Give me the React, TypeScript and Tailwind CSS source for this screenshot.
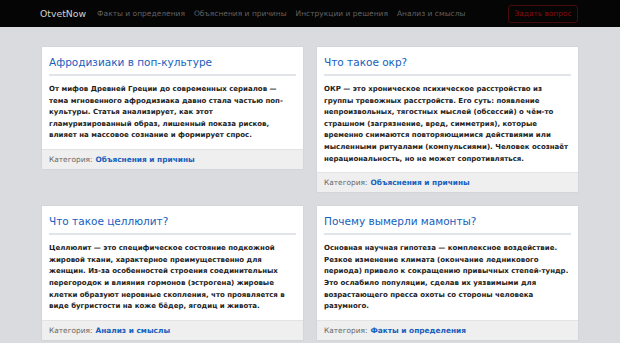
const nav = ['Факты и определения', 'Объяснения и причины', 'Инструкции и решения', 'Анализ и смыслы'];

// lines are broken where the original page breaks them
const cards = [
  {
    title: 'Афродизиаки в поп-культуре',
    lines: [
      'От мифов Древней Греции до современных сериалов —',
      'тема мгновенного афродизиака давно стала частью поп-',
      'культуры. Статья анализирует, как этот',
      'гламуризированный образ, лишенный показа рисков,',
      'влияет на массовое сознание и формирует спрос.',
    ],
    category: 'Объяснения и причины',
  },
  {
    title: 'Что такое окр?',
    lines: [
      'ОКР — это хроническое психическое расстройство из',
      'группы тревожных расстройств. Его суть: появление',
      'непроизвольных, тягостных мыслей (обсессий) о чём-то',
      'страшном (загрязнение, вред, симметрия), которые',
      'временно снимаются повторяющимися действиями или',
      'мысленными ритуалами (компульсиями). Человек осознаёт',
      'нерациональность, но не может сопротивляться.',
    ],
    category: 'Объяснения и причины',
  },
  {
    title: 'Что такое целлюлит?',
    lines: [
      'Целлюлит — это специфическое состояние подкожной',
      'жировой ткани, характерное преимущественно для',
      'женщин. Из-за особенностей строения соединительных',
      'перегородок и влияния гормонов (эстрогена) жировые',
      'клетки образуют неровные скопления, что проявляется в',
      'виде бугристости на коже бёдер, ягодиц и живота.',
    ],
    category: 'Анализ и смыслы',
  },
  {
    title: 'Почему вымерли мамонты?',
    lines: [
      'Основная научная гипотеза — комплексное воздействие.',
      'Резкое изменение климата (окончание ледникового',
      'периода) привело к сокращению привычных степей-тундр.',
      'Это ослабило популяции, сделав их уязвимыми для',
      'возрастающего пресса охоты со стороны человека',
      'разумного.',
    ],
    category: 'Факты и определения',
  },
];

export default function App() {
  return (
    <div className="min-h-[343px] bg-[#dadbde] font-['DejaVu_Sans',sans-serif]">
      <header className="h-[27px] bg-[#050505] flex items-center justify-between pl-[40px] pr-[42px]">
        <div className="flex items-center">
          <span className="text-[9.3px] text-[#d0d0d0] mr-[11px]">OtvetNow</span>
          <nav className="flex gap-[9px]">
            {nav.map((n) => (
              <a key={n} className="text-[7.5px] text-[#626262]">{n}</a>
            ))}
          </nav>
        </div>
        <button className="h-[18px] w-[70px] border border-[#4a0a0a] rounded-[3px] text-[7.4px] text-[#8a0c0c]">
          Задать вопрос
        </button>
      </header>

      <main className="px-[42px] pt-[20px] pb-[4px] grid grid-cols-2 gap-x-[14px] gap-y-[14px] items-start">
        {cards.map((c) => (
          <article key={c.title} className="bg-white shadow-[0_0_1px_rgba(0,0,0,0.15)]">
            <div className="px-[7px] pt-[8px] pb-[7px]">
              <h2 className="text-[10.5px] leading-[14px] text-[#1560bd] pb-[5px] border-b-2 border-[#e1e5ea] mb-[8px]">
                {c.title}
              </h2>
              <p className="text-[7px] leading-[11.6px] text-[#222] font-bold whitespace-nowrap">
                {c.lines.map((l, i) => (
                  <span key={i} className="block">{l}</span>
                ))}
              </p>
            </div>
            <div className="bg-[#efefef] border-t border-[#e3e3e3] px-[7px] h-[20px] flex items-center text-[7.4px]">
              <span className="text-[#666] mr-[3px]">Категория:</span>
              <a className="text-[#1560bd] font-bold">{c.category}</a>
            </div>
          </article>
        ))}
      </main>
    </div>
  );
}
